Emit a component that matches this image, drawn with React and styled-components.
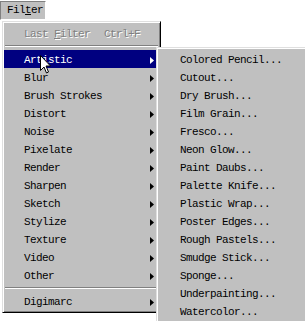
import React from "react";
import styled, { createGlobalStyle, css } from "styled-components";

const Global = createGlobalStyle`
  html, body { margin: 0; padding: 0; background: #fff; overflow: hidden; }
  body { font-family: "Liberation Mono", "DejaVu Sans Mono", monospace; }
  #root { width: 305px; height: 321px; position: relative; }
`;

const MenuBar = styled.div`
  display: flex;
  padding-top: 1px;
  height: 20px;
  box-sizing: border-box;
`;

const BarItem = styled.div`
  height: 19px;
  box-sizing: border-box;
  padding: 0 3px 0 6px;
  background: #c0c0c0;
  border: 1px solid;
  border-color: #808080 #fff #fff #808080;
  font-size: 11px;
  letter-spacing: -0.6px;
  line-height: 17px;
  color: #000;
  width: 46px;
`;

const Mnemonic = styled.span`
  text-decoration: underline;
  text-underline-offset: 1px;
`;

const menuFrame = css`
  background: #c0c0c0;
  border: 1px solid;
  border-color: #dfdfdf #000 #000 #dfdfdf;
  box-shadow: inset 1px 1px #fff, inset -1px -1px #808080;
  box-sizing: border-box;
  padding: 2px 1px;
  font-size: 11px;
  letter-spacing: -0.6px;
`;

const Dropdown = styled.div`
  ${menuFrame}
  position: absolute;
  top: 21px;
  left: 2px;
  width: 159px;
`;

const SubMenu = styled.div`
  ${menuFrame}
  position: absolute;
  top: -3px;
  left: calc(100% - 3px);
  width: 156px;
  z-index: 2;
`;

const Item = styled.div`
  position: relative;
  display: grid;
  grid-template-columns: 80px 1fr 4px;
  align-items: center;
  box-sizing: border-box;
  height: 18px;
  line-height: 16px;
  padding: 2px 5px 0 ${(p) => p.$inset}px;
  white-space: nowrap;
  color: ${(p) => (p.$active ? "#fff" : p.$disabled ? "#808080" : "#000")};
  background: ${(p) => (p.$active ? "#000080" : "transparent")};
  text-shadow: ${(p) => (p.$disabled ? "1px 1px 0 #fff" : "none")};
`;

const Label = styled.span``;
const Shortcut = styled.span``;

const Separator = styled.div`
  height: 8px;
  display: flex;
  flex-direction: column;
  justify-content: center;
  padding: 0 1px;
  &::before {
    content: "";
    display: block;
    height: 1px;
    background: #808080;
  }
  &::after {
    content: "";
    display: block;
    height: 1px;
    background: #fff;
  }
`;

const Arrow = ({ color }) => (
  <svg width="4" height="7" viewBox="0 0 4 7" style={{ display: "block" }}>
    <polygon points="0,0 4,3.5 0,7" fill={color} />
  </svg>
);

const Cursor = styled.svg`
  position: absolute;
  left: 40px;
  top: 55px;
  z-index: 5;
`;

const filters = [
  "Blur", "Brush Strokes", "Distort", "Noise", "Pixelate", "Render",
  "Sharpen", "Sketch", "Stylize", "Texture", "Video", "Other",
];

const artistic = [
  "Colored Pencil...", "Cutout...", "Dry Brush...", "Film Grain...", "Fresco...",
  "Neon Glow...", "Paint Daubs...", "Palette Knife...", "Plastic Wrap...",
  "Poster Edges...", "Rough Pastels...", "Smudge Stick...", "Sponge...",
  "Underpainting...", "Watercolor...",
];

export default function App() {
  return (
    <>
      <Global />
      <MenuBar>
        <BarItem>
          Fil<Mnemonic>t</Mnemonic>er
        </BarItem>
      </MenuBar>
      <Dropdown>
        <Item $inset={20} $disabled>
          <Label>
            Last <Mnemonic>F</Mnemonic>ilter
          </Label>
          <Shortcut>Ctrl+F</Shortcut>
          <span />
        </Item>
        <Separator />
        <Item $inset={20} $active>
          <Label>Artistic</Label>
          <span />
          <Arrow color="#fff" />
          <SubMenu>
            {artistic.map((a) => (
              <Item key={a} $inset={22}>
                <Label>{a}</Label>
              </Item>
            ))}
          </SubMenu>
        </Item>
        {filters.map((f) => (
          <Item key={f} $inset={20}>
            <Label>{f}</Label>
            <span />
            <Arrow color="#000" />
          </Item>
        ))}
        <Separator />
        <Item $inset={20}>
          <Label>Digimarc</Label>
          <span />
          <Arrow color="#000" />
        </Item>
      </Dropdown>
      <Cursor width="12" height="19" viewBox="0 0 12 19">
        <polygon
          points="0.5,0.5 0.5,15.5 4,12 6.5,18 8.5,17 6,11 10.5,11"
          fill="#fff"
          stroke="#000"
          strokeWidth="1"
        />
      </Cursor>
    </>
  );
}
